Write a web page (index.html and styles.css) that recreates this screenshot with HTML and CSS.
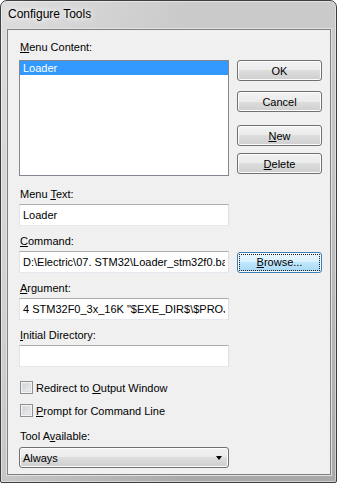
FILE: index.html
```
<html>
  <head>
    <link rel="stylesheet" href="styles.css">
    <title>Configure Tools</title>
  </head>
  <body>
    <div class="window">
      <div class="titlebar">Configure Tools</div>
      <div class="client">

        <div class="top">
          <div class="left">
            <div class="label first"><u>M</u>enu Content:</div>
            <div class="listbox">
              <div class="item selected">Loader</div>
            </div>
          </div>
          <div class="buttons">
            <button class="btn ok">OK</button>
            <button class="btn cancel">Cancel</button>
            <button class="btn new"><u>N</u>ew</button>
            <button class="btn delete"><u>D</u>elete</button>
          </div>
        </div>

        <div class="field first-field">
          <div class="label">Menu <u>T</u>ext:</div>
          <input class="textbox" type="text" value="Loader" readonly>
        </div>

        <div class="field">
          <div class="label"><u>C</u>ommand:</div>
          <div class="row">
            <input class="textbox" type="text" value="D:\Electric\07. STM32\Loader_stm32f0.bat" readonly>
            <button class="btn browse"><u>B</u>rowse...</button>
          </div>
        </div>

        <div class="field">
          <div class="label"><u>A</u>rgument:</div>
          <input class="textbox" type="text" value='4 STM32F0_3x_16K "$EXE_DIR$\$PROJ_DIR$' readonly>
        </div>

        <div class="field">
          <div class="label"><u>I</u>nitial Directory:</div>
          <input class="textbox" type="text" value="" readonly>
        </div>

        <div class="checkrow first-check">
          <span class="check"></span>
          <span>Redirect to <u>O</u>utput Window</span>
        </div>
        <div class="checkrow">
          <span class="check"></span>
          <span><u>P</u>rompt for Command Line</span>
        </div>

        <div class="field tool-field">
          <div class="label">Tool A<u>v</u>ailable:</div>
          <div class="combo">
            <span>Always</span>
            <span class="arrow"></span>
          </div>
        </div>

      </div>
    </div>
  </body>
</html>
```

FILE: styles.css
```
body {
  margin: 0;
  font-family: "Liberation Sans", Arial, sans-serif;
  font-size: 11px;
  color: #000;
}

/* window frame */
.window {
  width: 337px;
  height: 483px;
  box-sizing: border-box;
  border: 1px solid #3e3e3e;
  border-radius: 7px 7px 2px 2px;
  padding: 0 5px 7px 6px;
  background:
    linear-gradient(to right, rgba(255,255,255,0.35), rgba(255,255,255,0) 55%),
    linear-gradient(#cbcbcb, #c2c2c2 40%, #a9a9a9);
  box-shadow: inset 0 0 0 1px rgba(255,255,255,0.45);
}

.titlebar {
  height: 28px;
  box-sizing: border-box;
  padding: 6px 0 0 1px;
  font-size: 12px;
  line-height: 15px;
  text-shadow: 0 0 6px #fff, 0 0 10px #fff;
}

.client {
  height: 446px;
  box-sizing: border-box;
  border: 1px solid #808080;
  box-shadow: 0 0 0 1px #e2e2e2;
  background: #f0f0f0;
  padding: 11px 0 0 11px;
}

.label {
  line-height: 13px;
  height: 13px;
  padding-left: 1px;
  margin-bottom: 3px;
}

.label.first {
  margin-bottom: 6px;
}

/* top: list + buttons */
.top {
  display: flex;
  gap: 8px;
}

.left {
  width: 210px;
}

.listbox {
  height: 116px;
  box-sizing: border-box;
  border: 1px solid #828790;
  background: #fff;
}

.item {
  height: 14px;
  line-height: 14px;
  padding-left: 3px;
}

.item.selected {
  background: #3399ff;
  color: #fff;
}

.buttons {
  display: flex;
  flex-direction: column;
  padding-top: 19px;
}

.btn {
  width: 85px;
  height: 21px;
  padding: 0;
  font-family: "Liberation Sans", Arial, sans-serif;
  font-size: 11px;
  color: #000;
  border: 1px solid #707070;
  border-radius: 3px;
  background: linear-gradient(#f2f2f2, #ebebeb 50%, #dddddd 50%, #cfcfcf);
  box-shadow: inset 0 0 0 1px #fcfcfc;
}

.btn.cancel { margin-top: 10px; }
.btn.new { margin-top: 13px; }
.btn.delete { margin-top: 7px; }

.btn.browse {
  border-color: #3c7fb1;
  background: linear-gradient(#eaf6fd, #d9f0fc 50%, #bee6fd 50%, #a7d9f5);
  box-shadow: inset 0 0 0 1px #f4fbfe;
  outline: 1px dotted #202020;
  outline-offset: -3px;
}

/* text fields */
.field {
  margin-top: 9px;
}

.field.first-field {
  margin-top: 12px;
}

.textbox {
  display: block;
  width: 210px;
  height: 22px;
  box-sizing: border-box;
  margin: 0;
  padding: 0 3px;
  border: 1px solid;
  border-color: #abadb3 #dbdfe6 #e3e9ef #e2e3ea;
  background: #fff;
  font-family: "Liberation Sans", Arial, sans-serif;
  font-size: 11px;
  color: #000;
  outline: none;
}

.row {
  display: flex;
  align-items: center;
  gap: 8px;
}

/* check boxes */
.checkrow {
  display: flex;
  align-items: center;
  gap: 3px;
  height: 13px;
  padding-left: 1px;
  margin-top: 10px;
}

.checkrow.first-check {
  margin-top: 14px;
}

.check {
  width: 13px;
  height: 13px;
  box-sizing: border-box;
  border: 1px solid #8e8f8f;
  background: linear-gradient(135deg, #c9ccd1, #f3f3f3);
  box-shadow: inset 0 0 0 1px #f4f4f4, inset 0 0 0 2px #dedfe1;
}

/* drop-down */
.field.tool-field {
  margin-top: 13px;
}

.field.tool-field .label {
  margin-bottom: 4px;
}

.combo {
  width: 210px;
  height: 21px;
  box-sizing: border-box;
  border: 1px solid #707070;
  border-radius: 3px;
  background: linear-gradient(#f2f2f2, #ebebeb 50%, #dddddd 50%, #cfcfcf);
  box-shadow: inset 0 0 0 1px #fcfcfc;
  display: flex;
  align-items: center;
  justify-content: space-between;
  padding: 0 6px 0 3px;
}

.arrow {
  width: 0;
  height: 0;
  border-left: 3.5px solid transparent;
  border-right: 3.5px solid transparent;
  border-top: 4px solid #000;
}
```
